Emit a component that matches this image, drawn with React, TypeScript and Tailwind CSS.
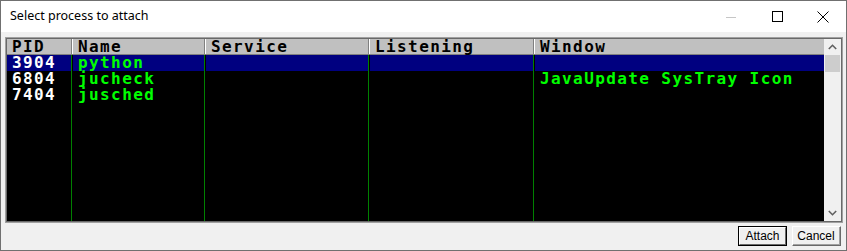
import React from "react";

const mono = { fontFamily: '"DejaVu Sans Mono", "Liberation Mono", monospace' };

const cols = [
  { name: "PID", w: "w-[65px]" },
  { name: "Name", w: "w-[133px]" },
  { name: "Service", w: "w-[164px]" },
  { name: "Listening", w: "w-[165px]" },
  { name: "Window", w: "flex-1" },
];

const rows = [
  ["3904", "python", "", "", ""],
  ["6804", "jucheck", "", "", "JavaUpdate SysTray Icon"],
  ["7404", "jusched", "", "", ""],
];

export default function App() {
  return (
    <div className="w-[847px] h-[251px] border border-[#707070] flex flex-col bg-[#f0f0f0] overflow-hidden">
      {/* title bar */}
      <div className="h-[31px] bg-white flex items-center relative shrink-0">
        <span
          className="pl-[9px] text-[12.5px] text-black"
          style={{ fontFamily: '"Noto Sans", "Open Sans", sans-serif' }}
        >
          Select process to attach
        </span>
        <div className="ml-auto flex items-center h-full">
          <div className="w-[46px] h-full flex items-center justify-center">
            <div className="w-[10px] h-px bg-[#c6c6c6] mt-[1px]" />
          </div>
          <div className="w-[46px] h-full flex items-center justify-center">
            <div className="w-[11px] h-[11px] border border-black" />
          </div>
          <div className="w-[46px] h-full flex items-center justify-center">
            <svg width="12" height="12" viewBox="0 0 12 12">
              <path d="M0.5 0.5 L11.5 11.5 M11.5 0.5 L0.5 11.5" stroke="#000" strokeWidth="1" />
            </svg>
          </div>
        </div>
      </div>

      {/* client */}
      <div className="flex-1 flex flex-col pl-[4px] pr-[3px] pt-[5px]">
        <div className="h-[186px] border border-[#a0a0a0] flex">
          <div className="flex-1 border border-[#696969] flex">
            <div className="flex-1 flex flex-col bg-black" style={mono}>
              {/* header */}
              <div className="flex h-[16px] bg-[#c0c0c0] border-b border-[#808080]">
                {cols.map((c, i) => (
                  <div
                    key={c.name}
                    className={`${c.w} h-full flex items-center pl-[5px] text-[16px] font-bold text-black tracking-[1.4px] leading-none ${
                      i < cols.length - 1 ? "border-r border-[#808080]" : ""
                    } ${i > 0 ? "border-l border-l-white" : ""}`}
                  >
                    {c.name}
                  </div>
                ))}
              </div>
              {/* body */}
              <div className="flex-1 flex">
                {cols.map((c, ci) => (
                  <div
                    key={c.name}
                    className={`${c.w} flex flex-col ${
                      ci < cols.length - 1 ? "border-r border-[#008000]" : ""
                    } ${ci > 0 ? "border-l border-l-black" : ""}`}
                  >
                    {rows.map((r, ri) => (
                      <div
                        key={ri}
                        className={`h-[16px] flex items-center pl-[5px] text-[16px] font-bold tracking-[1.4px] leading-none whitespace-nowrap ${
                          ri === 0 ? "bg-[#000080]" : ""
                        } ${ci === 0 ? "text-white" : "text-[#00ff00]"}`}
                      >
                        {r[ci]}
                      </div>
                    ))}
                  </div>
                ))}
              </div>
            </div>
            {/* scrollbar */}
            <div className="w-[17px] bg-[#f0f0f0] flex flex-col">
              <div className="h-[16px] flex items-center justify-center">
                <svg width="9" height="6" viewBox="0 0 9 6">
                  <path d="M0.8 5 L4.5 1.3 L8.2 5" stroke="#606060" strokeWidth="1.6" fill="none" />
                </svg>
              </div>
              <div className="h-[17px] mx-[1px] bg-[#cdcdcd]" />
              <div className="flex-1" />
              <div className="h-[16px] flex items-center justify-center">
                <svg width="9" height="6" viewBox="0 0 9 6">
                  <path d="M0.8 1 L4.5 4.7 L8.2 1" stroke="#606060" strokeWidth="1.6" fill="none" />
                </svg>
              </div>
            </div>
          </div>
        </div>

        {/* buttons */}
        <div
          className="flex justify-end gap-[5px] pr-[2px] mt-[3px] text-[12px]"
          style={{ fontFamily: '"Liberation Sans", Arial, sans-serif' }}
        >
          <div className="w-[49px] h-[20px] border border-black">
            <div className="w-full h-full border-t border-l border-white border-r border-b border-r-[#696969] border-b-[#696969] bg-[#f0f0f0] flex items-center justify-center text-black">
              Attach
            </div>
          </div>
          <div className="w-[49px] h-[20px] border-t border-l border-white border-r border-b border-r-[#696969] border-b-[#696969]">
            <div className="w-full h-full border-r border-b border-[#a0a0a0] border-t-0 border-l-0 bg-[#f0f0f0] flex items-center justify-center text-black">
              Cancel
            </div>
          </div>
        </div>
      </div>
    </div>
  );
}
